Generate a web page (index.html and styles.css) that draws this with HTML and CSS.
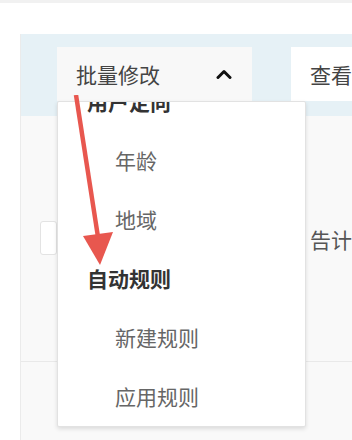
FILE: index.html
```html
<!DOCTYPE html>
<html lang="zh-CN">
<head>
  <meta charset="UTF-8" />
  <title>批量修改</title>
  <meta name="viewport" content="width=device-width, initial-scale=1" />
  <link rel="stylesheet" href="styles.css">
</head>
<body>

  <!-- TOP STRIP -->
  <div class="top-strip"></div>

  <!-- PANEL -->
  <div class="panel">
    <div class="toolbar">
      <div class="dropdown">
        <button class="btn btn-batch">
          <span>批量修改</span>
          <svg class="chevron" width="16" height="10" viewBox="0 0 16 10">
            <polyline points="2,8.5 8,2.5 14,8.5" fill="none" stroke="#111" stroke-width="3" stroke-linecap="round" stroke-linejoin="round"/>
          </svg>
        </button>
        <div class="menu">
          <ul class="menu-list">
            <li class="menu-group">用户定向</li>
            <li class="menu-item">年龄</li>
            <li class="menu-item">地域</li>
            <li class="menu-group">自动规则</li>
            <li class="menu-item">新建规则</li>
            <li class="menu-item">应用规则</li>
          </ul>
        </div>
      </div>
      <button class="btn btn-view">查看</button>
    </div>

    <div class="content">
      <div class="row">
        <div class="check"></div>
        <div class="cell-text">告计</div>
      </div>
      <div class="row row-empty"></div>
    </div>

    <!-- annotation arrow -->
    <svg class="arrow" width="60" height="180" viewBox="0 0 60 180">
      <line x1="19" y1="0" x2="41" y2="142" stroke="#e8574f" stroke-width="4.5"/>
      <polygon points="26,141 56,137 43,170" fill="#e8574f"/>
    </svg>
  </div>

</body>
</html>
```

FILE: styles.css
```css
* {
  box-sizing: border-box;
}

body, html {
  margin: 0;
  padding: 0;
  font-family: "Noto Sans CJK SC", "Noto Sans", sans-serif;
  background: #ffffff;
  color: #444;
  overflow: hidden;
}

/* TOP STRIP */
.top-strip {
  height: 3px;
  background-color: #f1f1f1;
}

/* PANEL */
.panel {
  position: relative;
  margin: 31px 0 0 20px;
  border-left: 1px solid #ebebeb;
  background-color: #f9f9f9;
  height: 420px;
}

.toolbar {
  display: flex;
  gap: 39px;
  height: 82px;
  padding: 13px 0 0 36px;
  background-color: #e6f1f6;
}

.dropdown {
  position: relative;
  flex-shrink: 0;
}

.btn {
  display: flex;
  align-items: center;
  height: 54px;
  border: none;
  padding: 0 19px;
  font-family: inherit;
  font-size: 21px;
  color: #444;
  white-space: nowrap;
}

.btn-batch {
  width: 195px;
  justify-content: space-between;
  background-color: #f8f8f8;
}

.chevron {
  margin-right: 1px;
}

.btn-view {
  flex: 1;
  background-color: #ffffff;
}

/* MENU */
.menu {
  position: absolute;
  top: 54px;
  left: 0;
  width: 249px;
  height: 326px;
  background-color: #ffffff;
  border: 1px solid #e2e2e2;
  border-radius: 2px;
  box-shadow: 0 2px 4px rgba(0, 0, 0, 0.12);
  overflow: hidden;
  z-index: 10;
}

.menu-list {
  list-style: none;
  margin: -30px 0 0 0;
  padding: 0;
}

.menu-list li {
  height: 59px;
  line-height: 59px;
  font-size: 21px;
  white-space: nowrap;
}

.menu-group {
  padding-left: 29px;
  font-weight: bold;
  color: #333;
}

.menu-item {
  padding-left: 57px;
  color: #666;
}

/* CONTENT */
.content {
  display: flex;
  flex-direction: column;
}

.row {
  display: flex;
  align-items: center;
  height: 246px;
  padding: 0 0 0 19px;
  border-bottom: 1px solid #e9e9e9;
}

.check {
  flex-shrink: 0;
  width: 17px;
  height: 34px;
  background-color: #ffffff;
  border: 1px solid #e3e3e3;
  border-radius: 3px;
  margin-top: -2px;
}

.cell-text {
  margin-left: 253px;
  font-size: 21px;
  color: #555;
  white-space: nowrap;
}

.row-empty {
  border-bottom: none;
  height: 80px;
}

/* ANNOTATION */
.arrow {
  position: absolute;
  top: 61px;
  left: 36px;
  z-index: 20;
}
```
